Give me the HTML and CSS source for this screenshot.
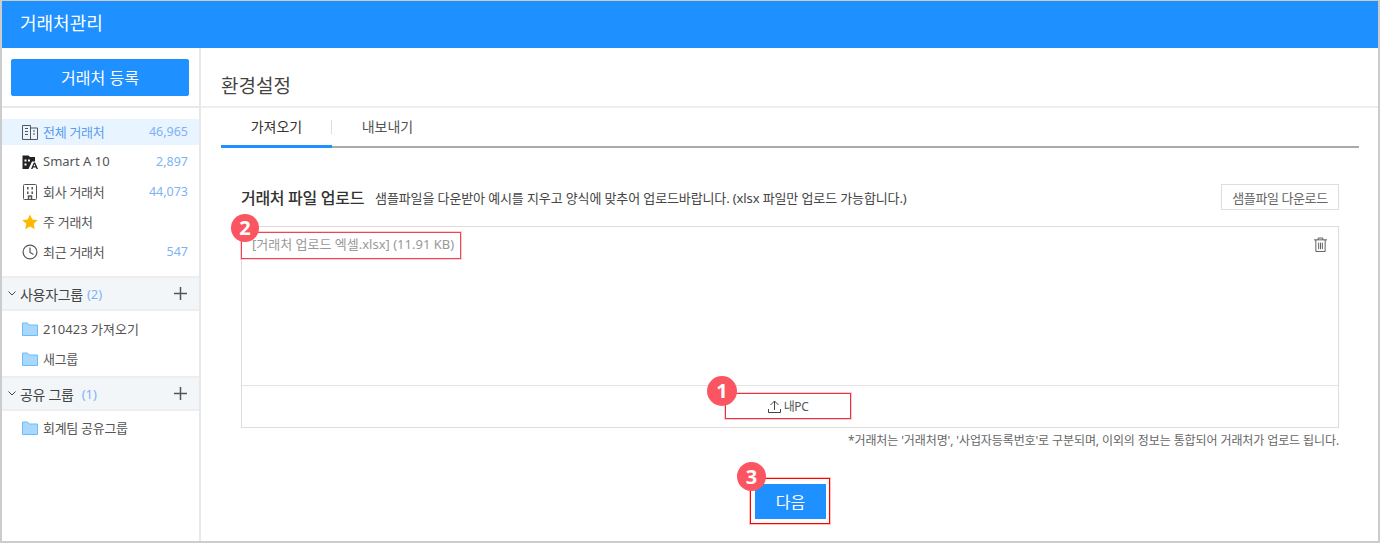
FILE: index.html
```html
<!DOCTYPE html>
<html lang="ko">
<head>
<meta charset="utf-8">
<title>거래처관리</title>
<link rel="stylesheet" href="styles.css">
</head>
<body>
<div class="app">
  <header class="topbar">거래처관리</header>
  <div class="body">
    <aside class="sidebar">
      <div class="side-top"><button class="register">거래처 등록</button></div>
      <ul class="menu">
        <li class="row active">
          <svg class="ico" viewBox="0 0 16 16" fill="none" stroke="#555" stroke-width="1"><path d="M.5 15.500V1.500h8v14M8.500 4h7v11.500H.5"/><path d="M3 4.500h3M3 7.500h3M3 10.500h3M11 7h2M11 10h2"/></svg>
          <span class="lbl">전체 거래처</span><span class="num">46,965</span></li>
        <li class="row">
          <svg class="ico" viewBox="0 0 16 16"><path d="M.5 1.500h6L8 3h5v4.500H10L6.500 15H.5z" fill="#222"/><rect x="2.500" y="5.500" width="2" height="2" fill="#fff"/><rect x="6" y="5.500" width="2" height="2" fill="#fff"/><rect x="2.500" y="9.500" width="2" height="2" fill="#fff"/><path d="M9 15l2.800-6.500h1.400L16 15h-1.500l-.6-1.500h-2.800l-.6 1.500zM11.500 12.300h1.900l-.9-2.300z" fill="#222" fill-rule="evenodd"/></svg>
          <span class="lbl lbl-open">Smart A 10</span><span class="num">2,897</span></li>
        <li class="row">
          <svg class="ico" viewBox="0 0 16 16" fill="none" stroke="#555"><rect x="1.500" y=".5" width="13" height="15" rx="1"/><path d="M5.800 3v2.500M10.200 3v2.500M5.800 7.500V10M10.200 7.500V10M6.500 15v-3h3v3" stroke-width="1.500"/></svg>
          <span class="lbl">회사 거래처</span><span class="num">44,073</span></li>
        <li class="row">
          <svg class="ico" viewBox="0 0 16 16"><path d="M8 .5l2.300 5 5.400.6-4 3.700 1.100 5.400L8 12.500l-4.800 2.700 1.100-5.400-4-3.700 5.400-.6z" fill="#fcb900"/></svg>
          <span class="lbl">주 거래처</span></li>
        <li class="row">
          <svg class="ico" viewBox="0 0 16 16" fill="none" stroke="#555" stroke-width="1.200"><circle cx="8" cy="8" r="6.900"/><path d="M8 3.500V8.500l3.500 2"/></svg>
          <span class="lbl">최근 거래처</span><span class="num">547</span></li>
      </ul>
      <div class="group">
        <svg class="chev" viewBox="0 0 8 5" fill="none" stroke="#444"><path d="M.5.5L4 4 7.500.5"/></svg>
        <span class="g-name">사용자그룹</span><span class="g-count">(2)</span>
        <svg class="plus" viewBox="0 0 13 13" fill="none" stroke="#555" stroke-width="1.500"><path d="M6.500 0v13M0 6.500h13"/></svg>
      </div>
      <ul class="folders">
        <li class="row"><svg class="ico" viewBox="0 0 16 14"><path d="M.5 1v12.500h15V3H7L5.500 1z" fill="#a8d8ff" stroke="#6cbcf7"/></svg><span class="lbl lbl-open">210423 가져오기</span></li>
        <li class="row"><svg class="ico" viewBox="0 0 16 14"><path d="M.5 1v12.500h15V3H7L5.500 1z" fill="#a8d8ff" stroke="#6cbcf7"/></svg><span class="lbl">새그룹</span></li>
      </ul>
      <div class="group">
        <svg class="chev" viewBox="0 0 8 5" fill="none" stroke="#444"><path d="M.5.5L4 4 7.500.5"/></svg>
        <span class="g-name">공유 그룹</span><span class="g-count wide">(1)</span>
        <svg class="plus" viewBox="0 0 13 13" fill="none" stroke="#555" stroke-width="1.500"><path d="M6.500 0v13M0 6.500h13"/></svg>
      </div>
      <ul class="folders last">
        <li class="row"><svg class="ico" viewBox="0 0 16 14"><path d="M.5 1v12.500h15V3H7L5.500 1z" fill="#a8d8ff" stroke="#6cbcf7"/></svg><span class="lbl">회계팀 공유그룹</span></li>
      </ul>
    </aside>
    <main class="main">
      <h1 class="title">환경설정</h1>
      <nav class="tabs">
        <a class="tab on">가져오기</a>
        <a class="tab">내보내기</a>
      </nav>
      <section class="upload">
        <div class="up-head">
          <strong class="up-title">거래처 파일 업로드</strong>
          <span class="up-desc">샘플파일을 다운받아 예시를 지우고 양식에 맞추어 업로드바랍니다. (xlsx 파일만 업로드 가능합니다.)</span>
          <button class="sample">샘플파일 다운로드</button>
        </div>
        <div class="box">
          <div class="files">
            <span class="file">[거래처 업로드 엑셀.xlsx] (11.91 KB)<i class="badge b2">2</i></span>
            <svg class="trash" viewBox="0 0 14 16" fill="none" stroke="#555"><path d="M0 3h14M2 3v12.500h10V3M4.500 3V1h5v2M5 6v7M7 6v7M9 6v7"/></svg>
          </div>
          <div class="box-foot">
            <button class="pc">
              <svg class="up-ico" viewBox="0 0 13 13" fill="none" stroke="#444"><path d="M6.500 10V1M2.500 5l4-4 4 4M.5 9v3.500h12V9"/></svg>내PC<i class="badge b1">1</i>
            </button>
          </div>
        </div>
        <p class="note">*거래처는 '거래처명', '사업자등록번호'로 구분되며, 이외의 정보는 통합되어 거래처가 업로드 됩니다.</p>
        <div class="next-wrap"><div class="next-mark"><button class="next">다음</button><i class="badge b3">3</i></div></div>
      </section>
    </main>
  </div>
</div>
</body>
</html>
```
FILE: styles.css
```css
* { box-sizing: border-box; }
html, body { margin: 0; height: 100%; }
body { font-family: "Noto Sans", "Noto Sans CJK KR", sans-serif; color: #555; background: #fff; overflow: hidden; }
button { font-family: inherit; cursor: pointer; }
ul { list-style: none; margin: 0; padding: 0; }
.app { width: 1380px; height: 543px; border: 1px solid #ccc; border-left-width: 2px; border-right-width: 2px; border-bottom-width: 2px; display: flex; flex-direction: column; }
.topbar { height: 47px; flex: none; background: #1e90ff; color: #fff; font-size: 18px; line-height: 44px; padding-left: 18px; }
.body { flex: 1; display: flex; min-height: 0; }
.sidebar { width: 199px; flex: none; border-right: 2px solid #e8e8e8; }
.side-top { height: 60px; padding: 11px 9px 0; border-bottom: 2px solid #e8e8e8; }
.register { display: block; width: 178px; height: 37px; border: 1px solid #1e90ff; border-radius: 2px; background: #1e90ff; color: #fff; font-size: 16px; padding: 0 0 2px; }
.menu { padding-top: 9px; padding-bottom: 9px; }
.row { height: 30px; display: flex; align-items: center; padding: 0 11px 0 20px; font-size: 13px; letter-spacing: -.3px; color: #555; }
.row.active { height: 26px; margin: 2px 0; color: #5a9cf0; background: #e8f4ff; }
.ico { width: 16px; height: 16px; flex: none; margin-right: 5px; }
.lbl { flex: 1; white-space: nowrap; padding-bottom: 2px; }
.lbl-open { letter-spacing: 0; }
.num { color: #7fb2f5; font-size: 12.500px; letter-spacing: 0; padding-bottom: 2px; }
.group { height: 35px; background: #f2f6f9; border-top: 2px solid #eee; border-bottom: 2px solid #eee; display: flex; align-items: center; padding: 0 11px 0 6px; font-size: 14px; letter-spacing: -.3px; color: #444; }
.chev { width: 8px; height: 5px; margin-right: 4px; flex: none; }
.g-name { white-space: nowrap; }
.g-count { color: #7fb2f5; font-size: 13px; letter-spacing: 0; margin-left: 4px; flex: 1; }
.g-count.wide { margin-left: 8px; }
.plus { width: 13px; height: 13px; flex: none; margin-right: 1px; }
.folders { padding: 3px 0 2px; }
.folders.last { padding-top: 2px; }
.folders .row { height: 30px; }
.folders .ico { height: 14px; }
.main { flex: 1; min-width: 0; display: flex; flex-direction: column; }
.title { height: 60px; margin: 0; padding: 25px 0 0 20px; font-size: 19px; line-height: 26px; font-weight: 400; color: #444; border-bottom: 2px solid #eee; }
.tabs { height: 40px; margin: 0 19px 0 20px; display: flex; border-bottom: 2px solid #aaa; flex: none; }
.tab { position: relative; width: 111px; height: 40px; text-align: center; font-size: 14px; line-height: 38px; color: #555; }
.tab.on { color: #333; border-bottom: 3px solid #1e90ff; }
.tab.on::after { content: ""; position: absolute; right: 0; top: 12px; height: 14px; border-right: 1px solid #ddd; }
.upload { padding: 36px 39px 0 40px; }
.up-head { display: flex; align-items: center; height: 26px; }
.up-title { font-size: 16px; letter-spacing: -.3px; font-weight: 500; color: #333; white-space: nowrap; }
.up-desc { margin-left: 11px; font-size: 13px; letter-spacing: -.12px; color: #444; flex: 1; white-space: nowrap; }
.sample { width: 118px; height: 26px; background: #fff; border: 1px solid #ddd; color: #666; font-size: 13px; letter-spacing: -.4px; padding: 0; }
.box { margin-top: 16px; height: 202px; border: 1px solid #ddd; display: flex; flex-direction: column; }
.files { flex: 1; display: flex; justify-content: space-between; align-items: flex-start; padding: 5px 11px 0 0; }
.file { position: relative; display: block; width: 220px; height: 27px; margin-left: -1px; border: 1px solid #f0454f; box-shadow: 0 0 0 1px rgba(240,69,79,.25); padding-left: 10px; line-height: 22px; font-size: 13px; color: #999; white-space: nowrap; }
.trash { width: 13px; height: 15px; margin-top: 5px; }
.box-foot { height: 42px; flex: none; border-top: 1px solid #e4e4e4; display: flex; justify-content: center; padding: 7px 4px 0 0; }
.pc { position: relative; width: 126px; height: 26px; background: #fff; border: 1px solid #e8323c; box-shadow: 0 0 0 1px rgba(232,50,60,.25); color: #555; font-size: 12px; letter-spacing: -.4px; padding: 0; display: flex; align-items: center; justify-content: center; }
.up-ico { width: 13px; height: 13px; margin-right: 3px; }
.note { margin: 5px 0 0; text-align: right; font-size: 12px; line-height: 16px; letter-spacing: -.1px; color: #666; }
.next-wrap { display: flex; justify-content: center; margin-top: 29px; }
.next-mark { position: relative; width: 80px; height: 46px; border: 1px solid #f00; box-shadow: 0 0 0 1px rgba(255,0,0,.25); padding: 5px 4px; }
.next { display: block; width: 71px; height: 35px; margin: 0; background: #1e90ff; border: 0; color: #fff; font-size: 16px; padding: 0 0 2px; }
.badge { position: absolute; border-radius: 50%; background: #fb5562; color: #fff; font-family: "Noto Sans", sans-serif; font-style: normal; font-weight: 700; font-size: 20px; letter-spacing: 0; line-height: 30px; width: 30px; height: 30px; text-align: center; }
.b1 { left: -19px; top: -18px; }
.b2 { left: -11px; top: -19px; width: 28px; height: 28px; line-height: 28px; }
.b3 { left: -14px; top: -17px; width: 29px; height: 29px; line-height: 29px; }
```
